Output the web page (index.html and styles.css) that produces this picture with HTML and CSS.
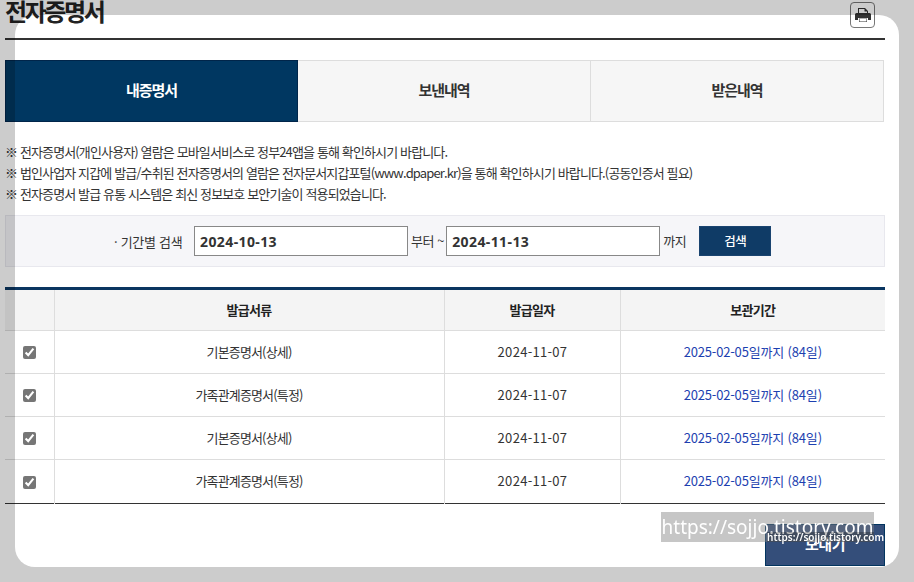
FILE: index.html
```
<!DOCTYPE html>
<html lang="ko">
<head>
<meta charset="utf-8">
<title>전자증명서</title>
<link rel="stylesheet" href="styles.css">
</head>
<body>
<div class="page">
  <header class="head">
    <h1 class="title">전자증명서</h1>
    <button class="print" aria-label="인쇄">
      <svg width="18" height="17" viewBox="0 0 18 17"><path fill="#333" d="M4 1h7l3 3v3H4z M1 7.500Q1 6 2.500 6h13Q17 6 17 7.500V13h-3v-2H4v2H1z M5 11.500h8V15H5z"/><path fill="#fff" d="M5 2h5.500v2.500H13V6H5zM5.500 11.800h7V14.500h-7z"/></svg>
    </button>
  </header>
  <nav class="tabs">
    <a class="tab on">내증명서</a>
    <a class="tab">보낸내역</a>
    <a class="tab">받은내역</a>
  </nav>
  <ul class="notes">
    <li>※ 전자증명서(개인사용자) 열람은 모바일서비스로 정부24앱을 통해 확인하시기 바랍니다.</li>
    <li>※ 법인사업자 지갑에 발급/수취된 전자증명서의 열람은 전자문서지갑포털(www.dpaper.kr)을 통해 확인하시기 바랍니다.(공동인증서 필요)</li>
    <li>※ 전자증명서 발급 유통 시스템은 최신 정보보호 보안기술이 적용되었습니다.</li>
  </ul>
  <div class="search">
    <span class="lbl">· 기간별 검색</span>
    <input class="date" value="2024-10-13">
    <span class="unit">부터 ~</span>
    <input class="date" value="2024-11-13">
    <span class="unit last">까지</span>
    <button class="go">검색</button>
  </div>
  <table class="list">
    <thead>
      <tr><th class="c0"></th><th class="c1">발급서류</th><th class="c2">발급일자</th><th class="c3">보관기간</th></tr>
    </thead>
    <tbody>
      <tr><td><input type="checkbox" class="chk" checked></td><td>기본증명서(상세)</td><td class="day">2024-11-07</td><td class="keep">2025-02-05일까지 (84일)</td></tr>
      <tr><td><input type="checkbox" class="chk" checked></td><td>가족관계증명서(특정)</td><td class="day">2024-11-07</td><td class="keep">2025-02-05일까지 (84일)</td></tr>
      <tr><td><input type="checkbox" class="chk" checked></td><td>기본증명서(상세)</td><td class="day">2024-11-07</td><td class="keep">2025-02-05일까지 (84일)</td></tr>
      <tr class="end"><td><input type="checkbox" class="chk" checked></td><td>가족관계증명서(특정)</td><td class="day">2024-11-07</td><td class="keep">2025-02-05일까지 (84일)</td></tr>
    </tbody>
  </table>
  <div class="foot"><button class="send">보내기</button></div>
</div>
<div class="dim"></div>
<div class="mark-big">https://sojjo.tistory.com</div>
<div class="mark-small">https://sojjo.tistory.com</div>
</body>
</html>
```
FILE: styles.css
```
* { box-sizing: border-box; }
html, body { margin: 0; height: 100%; overflow: hidden; background: #fff; }
body { font-family: "Noto Sans CJK KR", "Noto Sans", sans-serif; color: #333; font-size: 13px; }
.page { width: 880px; margin-left: 5px; }
.head { height: 40px; border-bottom: 2px solid #333; display: flex; justify-content: space-between; align-items: flex-start; }
.title { margin: 0; font-size: 24px; line-height: 22px; font-weight: 700; letter-spacing: -2.4px; color: #222; }
.print { width: 25px; height: 26px; margin: 2px 10px 0 0; padding: 0; background: #fff; border: 1px solid #777; border-radius: 4px; display: flex; align-items: center; justify-content: center; }
.tabs { display: flex; margin-top: 20px; height: 62px; width: 879px; border: 1px solid #ddd; border-left: 0; background: #f6f6f6; }
.tab { flex: 1; display: flex; align-items: center; justify-content: center; padding-bottom: 3px; font-size: 15px; font-weight: 700; letter-spacing: -1px; color: #333; border-left: 1px solid #ddd; }
.tab.on { flex: none; width: 293px; margin: -1px 0; background: #003761; border: 1px solid #00254a; color: #fff; }
.tab.on + .tab { border-left: 0; }
.notes { list-style: none; margin: 19px 0 0; padding: 0; font-size: 13px; line-height: 21px; letter-spacing: -0.87px; color: #333; }
.search { margin-top: 11px; height: 52px; background: #f6f6f9; border: 1px solid #e8e8ee; display: flex; align-items: center; padding-left: 108px; }
.lbl { width: 80px; font-size: 13px; letter-spacing: -0.3px; }
.date { width: 214px; height: 30px; padding: 0 5px; border: 1px solid #888; background: #fff; color: #333; font: 700 14px "Noto Sans", sans-serif; letter-spacing: 0.4px; border-radius: 0; outline: 0; }
.unit { margin: 0 2px 0 3px; letter-spacing: -0.4px; transform: translateY(-1px); }
.unit.last { margin: 0 13px 0 3px; }
.go { width: 72px; height: 30px; padding: 0 0 2px; background: #0f3b66; color: #fff; border: 1px solid #1a4470; font: 500 12.5px "Noto Sans CJK KR", sans-serif; letter-spacing: -0.3px; }
.list { margin-top: 20px; width: 880px; border-collapse: collapse; table-layout: fixed; border-top: 3px solid #0a3560; border-bottom: 1px solid #333; }
.list th { height: 42px; padding: 0 0 2px; background: #f4f4f4; font-size: 13px; font-weight: 700; letter-spacing: -0.7px; color: #222; border: 1px solid #ddd; border-top: 0; }
.list td { height: 43px; padding: 0 0 2px; text-align: center; font-size: 13px; letter-spacing: -0.85px; border: 1px solid #ddd; }
.list tr th:first-child, .list tr td:first-child { border-left: 0; }
.list tr th:last-child, .list tr td:last-child { border-right: 0; }
.list .end td { height: 44px; border-bottom: 0; }
.c0 { width: 49px; }
.c1 { width: 390px; }
.c2 { width: 176px; }
.c3 { width: 265px; }
.list .day { letter-spacing: 0.3px; padding-left: 1px; }
.list .keep { color: #1d3fb0; letter-spacing: -0.17px; }
.chk { width: 13px; height: 13px; margin: 0; vertical-align: middle; accent-color: #767676; }
.foot { display: flex; justify-content: flex-end; margin-top: 20px; }
.send { width: 120px; height: 42px; padding: 0 0 3px; background: #344e7a; border: 1px solid #03355f; color: #fff; font: 700 15px "Noto Sans CJK KR", sans-serif; letter-spacing: -0.5px; }
.dim { position: fixed; left: 15px; top: 15px; width: 884px; height: 552px; border-radius: 20px; box-shadow: 0 0 0 1000px rgba(0,0,0,.2); pointer-events: none; }
.mark-big { position: fixed; left: 661px; top: 512px; width: 213px; height: 30px; background: rgba(128,128,128,.45); color: #fff; font: 400 19px/30px "Noto Sans", sans-serif; white-space: nowrap; overflow: hidden; text-align: center; }
.mark-small { position: fixed; left: 767px; top: 532px; width: 107px; height: 10px; background: rgba(0,0,0,.25); color: #fff; font: 600 10px/10px "Noto Sans", sans-serif; white-space: nowrap; text-align: center; }
```
